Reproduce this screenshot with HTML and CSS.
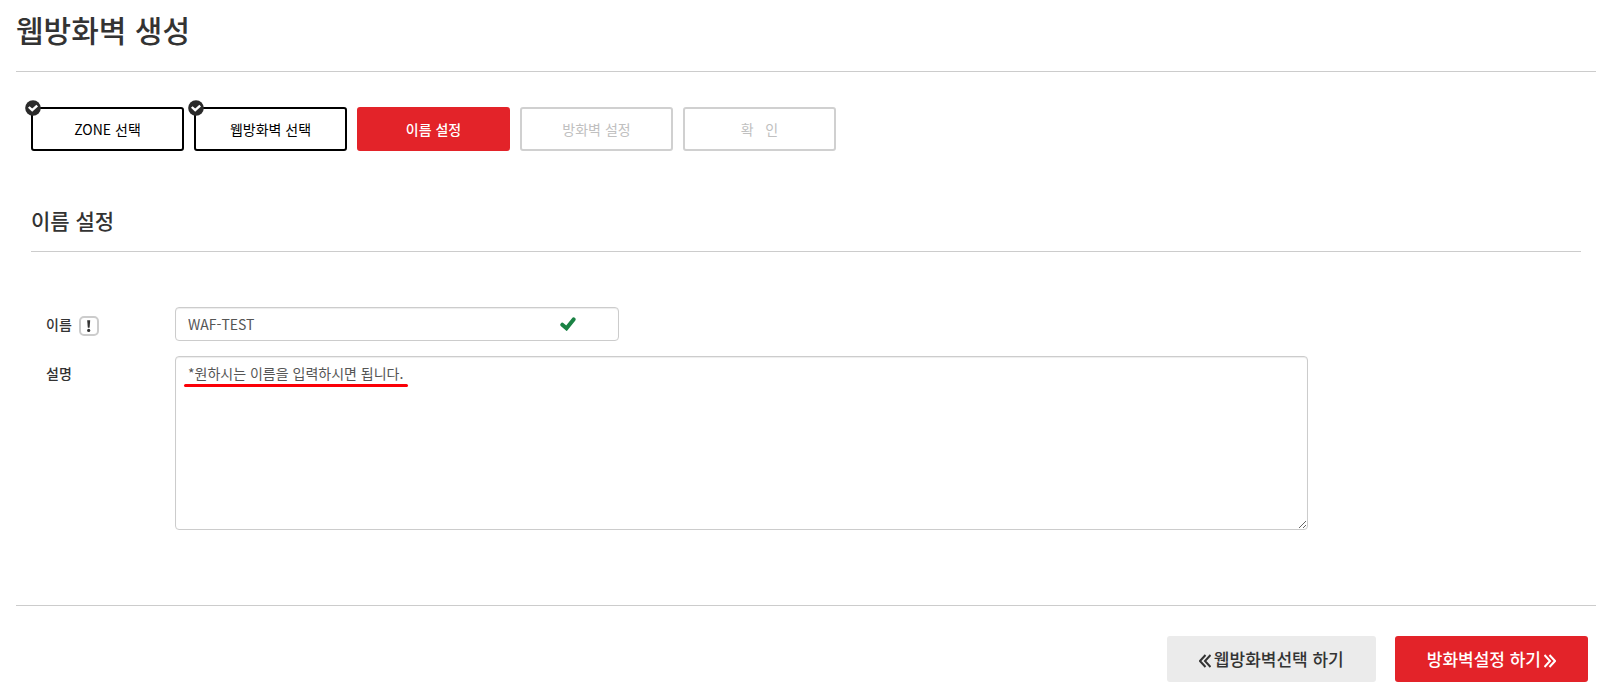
FILE: index.html
```html
<!DOCTYPE html>
<html lang="ko">
<head>
    <meta charset="UTF-8">
    <meta name="viewport" content="width=device-width, initial-scale=1.0">
    <title>웹방화벽 생성</title>
    <link rel="stylesheet" href="styles.css">
</head>
<body>
    <div class="page">
        <h1 class="page-title">웹방화벽 생성</h1>

        <div class="content">
            <ol class="steps">
                <li class="step done">
                    ZONE 선택
                    <svg class="step-check" viewBox="0 0 16 16"><circle cx="8" cy="8" r="7.8"/><path d="M3.8 7l3.4 3.2 5-4.6"/></svg>
                </li>
                <li class="step done">
                    웹방화벽 선택
                    <svg class="step-check" viewBox="0 0 16 16"><circle cx="8" cy="8" r="7.8"/><path d="M3.8 7l3.4 3.2 5-4.6"/></svg>
                </li>
                <li class="step active">이름 설정</li>
                <li class="step">방화벽 설정</li>
                <li class="step">확 &nbsp; 인</li>
            </ol>

            <h2 class="section-title">이름 설정</h2>

            <form class="form" id="nameForm">
                <div class="form-label">
                    <label for="wafName">이름</label>
                    <svg class="info-icon" viewBox="0 0 20 20">
                        <rect x="1" y="1" width="18" height="18" rx="4"/>
                        <path d="M8.2 4.2h3l-.6 7.6H8.8z"/>
                        <circle cx="9.7" cy="14.4" r="1.6"/>
                    </svg>
                </div>
                <div class="name-field">
                    <input type="text" class="form-control" id="wafName" value="WAF-TEST">
                    <svg class="valid-icon" viewBox="0 0 16 14"><path d="M2.3 7.7l4.2 3.6L13.6 2.4"/></svg>
                </div>

                <div class="form-label">
                    <label for="wafDesc">설명</label>
                </div>
                <div class="desc-field">
                    <textarea class="form-control" id="wafDesc" spellcheck="false">*원하시는 이름을 입력하시면 됩니다.</textarea>
                    <span class="underline"></span>
                </div>
            </form>
        </div>

        <div class="footer">
            <button type="button" class="btn">
                <svg class="arrow" viewBox="0 0 12 14"><path d="M6.5 1L1 7l5.5 6M11.5 1L6 7l5.5 6"/></svg>
                웹방화벽선택 하기
            </button>
            <button type="submit" form="nameForm" class="btn btn-primary">
                방화벽설정 하기
                <svg class="arrow" viewBox="0 0 12 14"><path d="M.5 1L6 7 .5 13M5.5 1L11 7l-5.5 6"/></svg>
            </button>
        </div>
    </div>
</body>
</html>
```
FILE: styles.css
```css
* {
    margin: 0;
    padding: 0;
    box-sizing: border-box;
}
body {
    font-family: 'Noto Sans CJK KR', sans-serif;
    font-size: 14px;
    line-height: 20px;
    color: #333;
    background: #fff;
}
.page {
    padding: 0 7px 0 16px;
}
.page-title {
    padding: 9px 0 22px;
    border-bottom: 1px solid #ccc;
    font-size: 30px;
    line-height: 40px;
    font-weight: 500;
}
.content {
    padding: 35px 15px 75px;
    border-bottom: 1px solid #ccc;
}
.steps {
    display: flex;
    gap: 10px;
    list-style: none;
}
.step {
    position: relative;
    width: 153px;
    padding: 10px 0;
    border: 2px solid #d0d0d0;
    border-radius: 3px;
    color: #c0c0c0;
    text-align: center;
}
.step.done {
    border-color: #000;
    color: #000;
}
.step.active {
    border-color: #e32329;
    background: #e32329;
    color: #fff;
    font-weight: 500;
}
.step-check {
    position: absolute;
    top: -9px;
    left: -8px;
    width: 16px;
    height: 16px;
    fill: #2a2a2a;
}
.step-check path {
    fill: none;
    stroke: #fff;
    stroke-width: 2.4;
}
.section-title {
    margin-top: 54px;
    padding-bottom: 16px;
    border-bottom: 1px solid #ccc;
    font-size: 21px;
    line-height: 30px;
    font-weight: 500;
}
.form {
    display: grid;
    grid-template-columns: 129px 1133fr 258fr;
    row-gap: 15px;
    padding: 55px 15px 0;
}
.form-label {
    display: flex;
    grid-column: 1;
    gap: 7px;
    padding-top: 7px;
    font-weight: 500;
}
.info-icon {
    width: 20px;
    height: 20px;
    margin-top: 2px;
    fill: #333;
}
.info-icon rect {
    fill: #fff;
    stroke: #ccc;
    stroke-width: 2;
}
.name-field,
.desc-field {
    position: relative;
    display: flex;
    grid-column: 2;
}
.name-field {
    width: 444px;
}
.form-control {
    width: 100%;
    height: 34px;
    padding: 6px 12px;
    border: 1px solid #ccc;
    border-radius: 4px;
    box-shadow: inset 0 1px 1px rgba(0, 0, 0, 0.075);
    background: #fff;
    font-family: inherit;
    font-size: 14px;
    line-height: 20px;
    color: #555;
}
textarea.form-control {
    height: 174px;
}
.valid-icon {
    position: absolute;
    top: 10px;
    right: 43px;
    width: 16px;
    height: 14px;
    fill: none;
    stroke: #1a8244;
    stroke-width: 4;
    stroke-linecap: round;
}
.underline {
    position: absolute;
    top: 28px;
    left: 9px;
    width: 224px;
    height: 3px;
    border-radius: 2px;
    background: #fb0007;
}
.footer {
    display: flex;
    justify-content: flex-end;
    gap: 19px;
    padding: 30px 8px 15px 0;
}
.btn {
    display: flex;
    align-items: center;
    gap: 3px;
    height: 46px;
    padding: 0 32px;
    border: none;
    border-radius: 3px;
    background: #ebebeb;
    font-family: inherit;
    font-size: 17px;
    line-height: 24px;
    font-weight: 500;
    color: #333;
    cursor: pointer;
}
.btn-primary {
    background: #e32329;
    color: #fff;
}
.arrow {
    width: 12px;
    height: 14px;
    margin-top: 4px;
    fill: none;
    stroke: currentColor;
    stroke-width: 2;
}
```
